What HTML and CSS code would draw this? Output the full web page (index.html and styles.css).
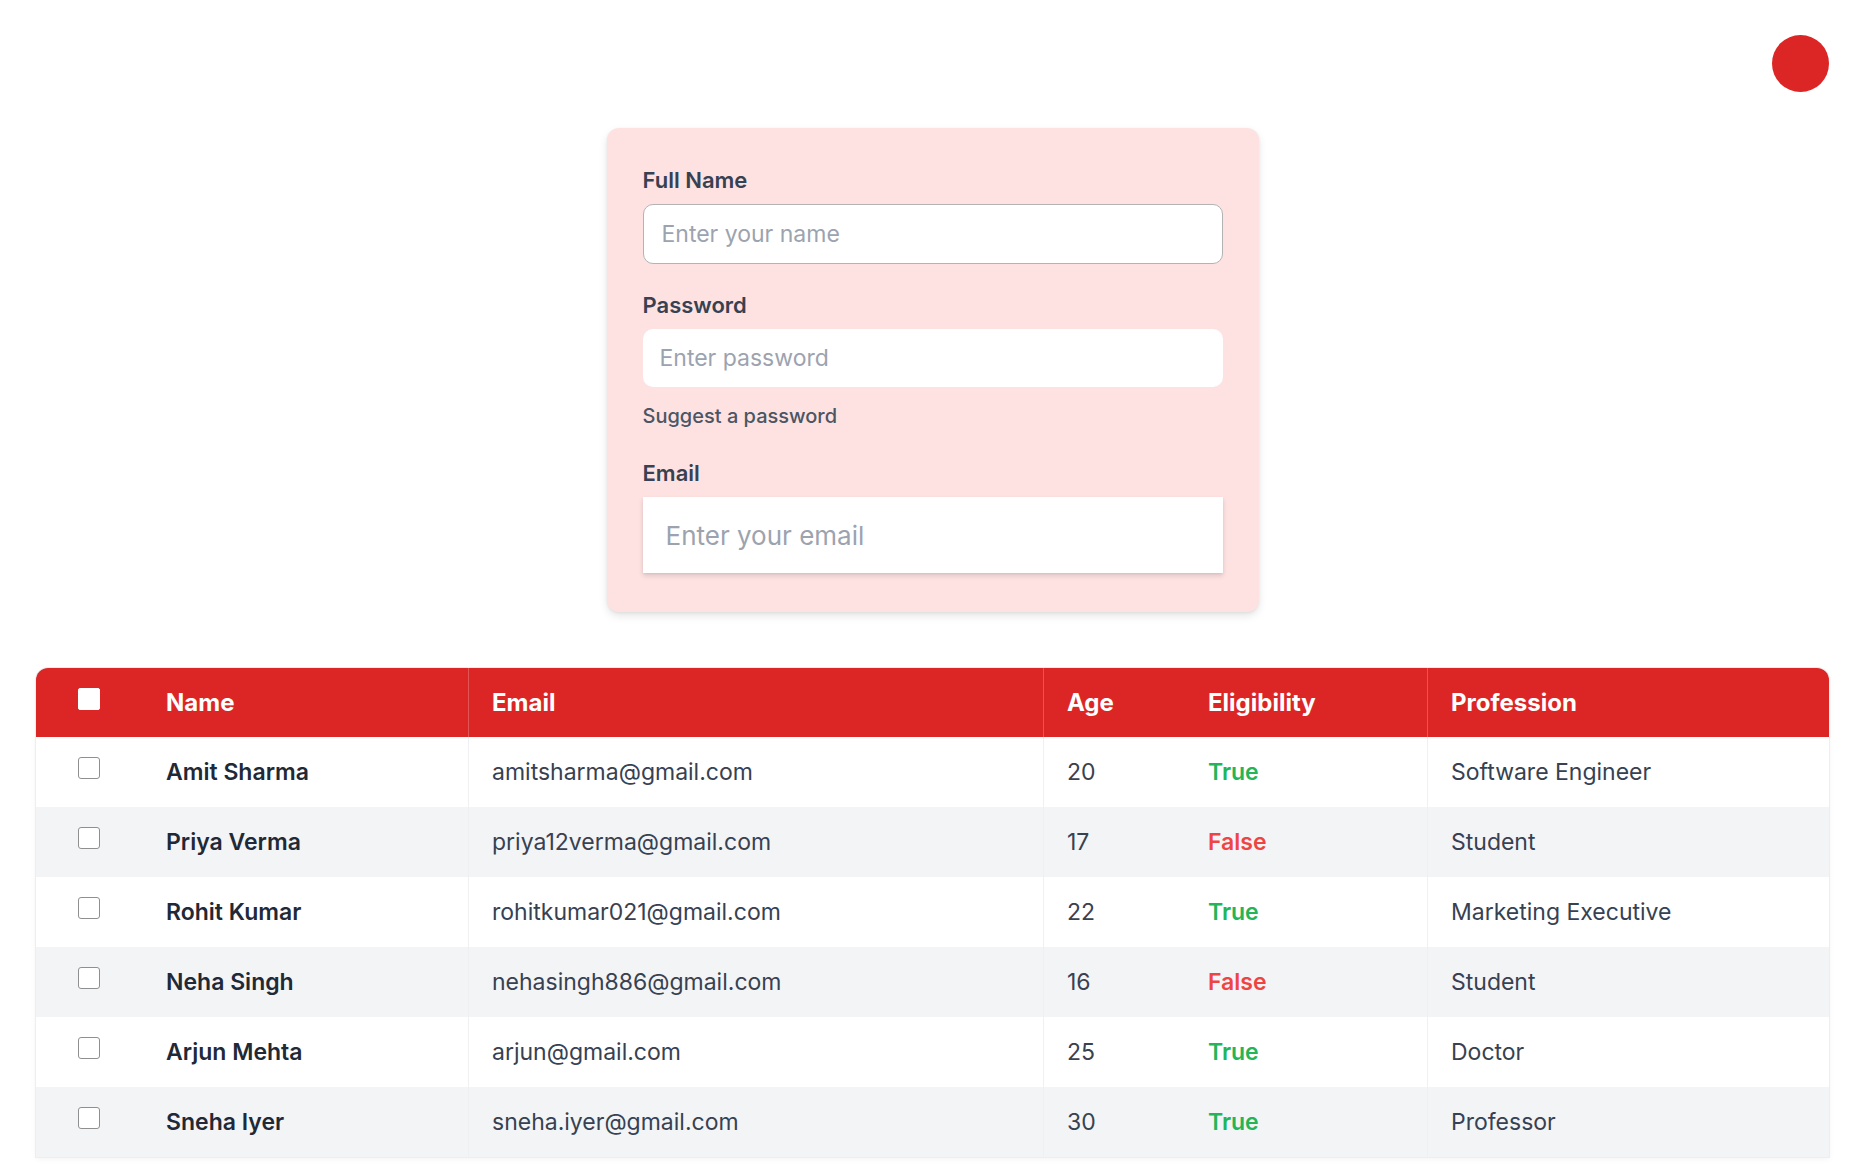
FILE: index.html
```html
<!DOCTYPE html>
<html lang="en">
<head>
<meta charset="utf-8">
<title>Users</title>
<link rel="stylesheet" href="styles.css">
</head>
<body>
<div class="page">
  <header class="topbar">
    <div class="avatar"></div>
  </header>

  <form class="card">
    <label class="label" for="name">Full Name</label>
    <input class="input input-name" id="name" type="text" placeholder="Enter your name">

    <label class="label label-gap" for="password">Password</label>
    <input class="input input-pass" id="password" type="password" placeholder="Enter password">
    <p class="suggest">Suggest a password</p>

    <label class="label label-gap2" for="email">Email</label>
    <input class="input input-email" id="email" type="email" placeholder="Enter your email">
  </form>

  <div class="table-wrap">
    <table class="users">
      <colgroup>
        <col class="c-check">
        <col class="c-name">
        <col class="c-email">
        <col class="c-age">
        <col class="c-elig">
        <col class="c-prof">
      </colgroup>
      <thead>
        <tr>
          <th class="check"><input type="checkbox" class="cb cb-head"></th>
          <th>Name</th>
          <th class="sep">Email</th>
          <th class="sep">Age</th>
          <th>Eligibility</th>
          <th class="sep">Profession</th>
        </tr>
      </thead>
      <tbody>
        <tr>
          <td class="check"><input type="checkbox" class="cb"></td>
          <td class="name">Amit Sharma</td>
          <td class="sep">amitsharma@gmail.com</td>
          <td class="sep">20</td>
          <td class="yes">True</td>
          <td class="sep">Software Engineer</td>
        </tr>
        <tr>
          <td class="check"><input type="checkbox" class="cb"></td>
          <td class="name">Priya Verma</td>
          <td class="sep">priya12verma@gmail.com</td>
          <td class="sep">17</td>
          <td class="no">False</td>
          <td class="sep">Student</td>
        </tr>
        <tr>
          <td class="check"><input type="checkbox" class="cb"></td>
          <td class="name">Rohit Kumar</td>
          <td class="sep">rohitkumar021@gmail.com</td>
          <td class="sep">22</td>
          <td class="yes">True</td>
          <td class="sep">Marketing Executive</td>
        </tr>
        <tr>
          <td class="check"><input type="checkbox" class="cb"></td>
          <td class="name">Neha Singh</td>
          <td class="sep">nehasingh886@gmail.com</td>
          <td class="sep">16</td>
          <td class="no">False</td>
          <td class="sep">Student</td>
        </tr>
        <tr>
          <td class="check"><input type="checkbox" class="cb"></td>
          <td class="name">Arjun Mehta</td>
          <td class="sep">arjun@gmail.com</td>
          <td class="sep">25</td>
          <td class="yes">True</td>
          <td class="sep">Doctor</td>
        </tr>
        <tr>
          <td class="check"><input type="checkbox" class="cb"></td>
          <td class="name">Sneha Iyer</td>
          <td class="sep">sneha.iyer@gmail.com</td>
          <td class="sep">30</td>
          <td class="yes">True</td>
          <td class="sep">Professor</td>
        </tr>
      </tbody>
    </table>
  </div>
</div>
</body>
</html>
```

FILE: styles.css
```css
* { box-sizing: border-box; }

html, body {
  margin: 0;
  padding: 0;
  background: #ffffff;
}

body {
  font-family: "Inter", "Noto Sans", "Liberation Sans", sans-serif;
  color: #1f2937;
}

.page {
  padding: 0 37px 40px 36px;
}

.topbar {
  display: flex;
  justify-content: flex-end;
  padding-top: 35px;
}

.avatar {
  width: 57px;
  height: 57px;
  border-radius: 50%;
  background: #dc2626;
}

/* ---------- form card ---------- */
.card {
  width: 652px;
  margin: 36px auto 0;
  padding: 37px 36px 39px;
  background: #fee2e2;
  border-radius: 12px;
  box-shadow: 0 4px 8px rgba(0, 0, 0, 0.10), 0 1px 3px rgba(0, 0, 0, 0.06);
  display: flex;
  flex-direction: column;
}

.label {
  display: block;
  font-size: 22px;
  line-height: 30px;
  font-weight: 600;
  color: #374151;
  margin-bottom: 9px;
}

.label-gap { margin-top: 26px; }
.label-gap2 { margin-top: 27px; }

.input {
  display: block;
  width: 100%;
  font-family: inherit;
  color: #1f2937;
  background: #ffffff;
  outline: none;
}

.input::placeholder { color: #9ca3af; }

.input-name {
  height: 60px;
  padding: 0 18px;
  font-size: 23px;
  border: 1px solid #b3b3b3;
  border-radius: 10px;
}

.input-pass {
  height: 58px;
  padding: 0 17px;
  font-size: 23px;
  border: none;
  border-radius: 10px;
}

.suggest {
  margin: 14px 0 0;
  font-size: 20px;
  line-height: 30px;
  font-weight: 500;
  color: #4b5563;
}

.input-email {
  height: 76px;
  padding: 0 23px;
  font-size: 26px;
  border: none;
  border-radius: 0;
  box-shadow: 0 3px 5px rgba(0, 0, 0, 0.12), 0 1px 2px rgba(0, 0, 0, 0.06);
}

/* ---------- table ---------- */
.table-wrap {
  margin-top: 56px;
  border-radius: 12px 12px 0 0;
  overflow: hidden;
  box-shadow: 0 0 0 1px #eceef1, 0 2px 6px rgba(0, 0, 0, 0.05);
}

.users {
  width: 100%;
  border-collapse: collapse;
  table-layout: fixed;
  font-size: 23px;
}

.c-check { width: 106px; }
.c-name  { width: 326px; }
.c-email { width: 575px; }
.c-age   { width: 141px; }
.c-elig  { width: 243px; }
.c-prof  { width: auto; }

.users th,
.users td {
  padding: 0 24px;
  text-align: left;
  white-space: nowrap;
}

.users thead tr {
  height: 69px;
  background: #dc2626;
}

.users th {
  color: #ffffff;
  font-size: 24px;
  font-weight: 700;
}

.users th.sep {
  box-shadow: inset 1px 0 0 rgba(255, 255, 255, 0.22);
}

.users tbody tr {
  height: 70px;
  background: #ffffff;
}

.users tbody tr:nth-child(even) {
  background: #f3f4f6;
}

.users td {
  color: #374151;
  font-weight: 400;
}

.users td.sep {
  box-shadow: inset 1px 0 0 #eef0f2;
}

.users td.name {
  color: #1f2937;
  font-weight: 600;
}

.users td.yes {
  color: #22b55a;
  font-weight: 600;
}

.users td.no {
  color: #ef4444;
  font-weight: 600;
}

.users .check {
  padding: 0;
  text-align: center;
}

.cb {
  -webkit-appearance: none;
  appearance: none;
  display: block;
  width: 22px;
  height: 22px;
  margin: -8px auto 0;
  background: #ffffff;
  border: 1.5px solid #8f8f8f;
  border-radius: 3px;
}

.cb-head {
  border-color: #ffffff;
  border-radius: 2px;
}
```
